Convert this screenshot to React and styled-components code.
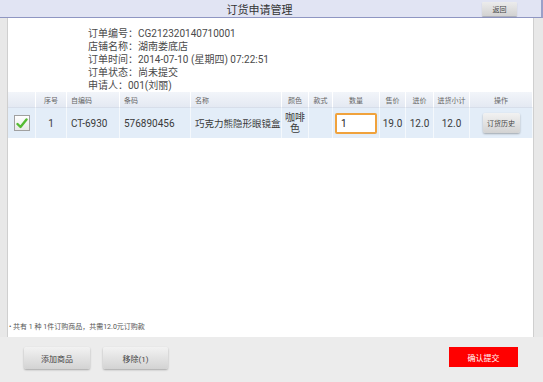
import React from 'react'
import styled, { createGlobalStyle } from 'styled-components'

const GlobalStyle = createGlobalStyle`
  *, *::before, *::after {
    box-sizing: border-box;
  }
  html, body {
    margin: 0;
    padding: 0;
    background: #ececec;
    font-family: Roboto, "Noto Sans CJK SC", sans-serif;
  }
`

const Screen = styled.div`
  width: 543px;
  height: 382px;
  display: flex;
  flex-direction: column;
  background: #ececec;
  overflow: hidden;
`

const TitleBar = styled.div`
  height: 18px;
  flex-shrink: 0;
  display: flex;
  align-items: center;
  padding-left: 37px;
  padding-right: 24px;
  background: #e1e4f3;
  border-bottom: 1px solid #8f96c2;
  border-right: 2px solid #9aa0c8;
`

const Title = styled.div`
  flex: 1;
  text-align: center;
  font-size: 11px;
  color: #333;
`

const BackButton = styled.button`
  width: 35px;
  height: 14px;
  padding: 0;
  border: none;
  border-radius: 1px;
  background: linear-gradient(#ececec, #d2d2d2);
  box-shadow: 0 1px 1px rgba(0, 0, 0, 0.25);
  font-family: inherit;
  font-size: 7px;
  color: #444;
`

const Main = styled.div`
  flex: 1;
  display: flex;
  min-height: 0;
`

const Gutter = styled.div`
  width: ${p => p.w}px;
  background: #e8e8e8;
  border-${p => p.side}: 1px solid #cfcfcf;
`

const Panel = styled.div`
  flex: 1;
  display: flex;
  flex-direction: column;
  background: #fff;
`

const Info = styled.div`
  padding: 9px 0 0 80px;
  font-size: 10px;
  line-height: 13px;
  color: #4a4a4a;
`

const Table = styled.div`
  display: grid;
  grid-template-columns: 28px 31px 53px 71px 91px 27px 24px 47px 26px 28px 36px 1fr;
`

const HeadCell = styled.div`
  height: 16px;
  display: flex;
  align-items: center;
  justify-content: ${p => (p.left ? 'flex-start' : 'center')};
  padding-left: ${p => (p.left ? 4 : 0)}px;
  background: linear-gradient(#f2f5fa, #e4e9f2);
  border-right: 1px solid #fff;
  border-bottom: 1px solid #d7deea;
  font-size: 7px;
  color: #666;
`

const Cell = styled.div`
  height: 30px;
  display: flex;
  align-items: center;
  justify-content: ${p => (p.left ? 'flex-start' : 'center')};
  padding-left: ${p => (p.left ? 4 : 0)}px;
  background: #e3edf8;
  border-right: 1px solid #f4f8fc;
  font-size: ${p => p.fs || 10}px;
  line-height: 11px;
  text-align: center;
  color: #3a3a3a;
`

const Check = styled.div`
  width: 16px;
  height: 16px;
  display: flex;
  align-items: center;
  justify-content: center;
  background: linear-gradient(#ffffff, #e8e8e8);
  border: 1px solid #a0a0a0;
`

const QtyInput = styled.div`
  width: 42px;
  height: 21px;
  display: flex;
  align-items: center;
  padding-left: 4px;
  background: #fff;
  border: 2px solid #f0a23c;
  border-radius: 2px;
  font-size: 10px;
  color: #222;
`

const GreyButton = styled.button`
  width: ${p => p.w}px;
  height: ${p => p.h}px;
  padding: 0;
  border: none;
  border-radius: 2px;
  background: linear-gradient(#f2f2f2, #d3d3d3);
  box-shadow: 0 1px 2px rgba(0, 0, 0, 0.3);
  font-family: inherit;
  font-size: ${p => p.fs}px;
  color: #444;
`

const Spacer = styled.div`
  flex: 1;
`

const Summary = styled.div`
  padding: 0 0 6px 1px;
  font-size: 7px;
  color: #555;
`

const Footer = styled.div`
  height: 45px;
  flex-shrink: 0;
  display: flex;
  align-items: flex-start;
  padding: 10px 25px 0 24px;
  gap: 13px;
`

const SubmitButton = styled.button`
  width: 69px;
  height: 20px;
  margin-left: auto;
  padding: 0;
  border: none;
  background: #ff0000;
  font-family: inherit;
  font-size: 8px;
  color: #fff;
`

const heads = [
  ['', false], ['序号', false], ['自编码', true], ['条码', true], ['名称', true],
  ['颜色', false], ['款式', false], ['数量', false], ['售价', false], ['进价', false],
  ['进货小计', false], ['操作', false]
]

export default function App () {
  return (
    <Screen>
      <GlobalStyle />
      <TitleBar>
        <Title>订货申请管理</Title>
        <BackButton>返回</BackButton>
      </TitleBar>
      <Main>
        <Gutter w={8} side='right' />
        <Panel>
          <Info>
            <div>订单编号：CG212320140710001</div>
            <div>店铺名称：湖南娄底店</div>
            <div>订单时间：2014-07-10 (星期四) 07:22:51</div>
            <div>订单状态：尚未提交</div>
            <div>申请人：001(刘丽)</div>
          </Info>
          <Table>
            {heads.map(([t, left], i) => (
              <HeadCell key={i} left={left}>{t}</HeadCell>
            ))}
            <Cell>
              <Check>
                <svg width='12' height='11' viewBox='0 0 12 11'>
                  <path d='M1.5 6 L4.5 9 L10.5 1.5' fill='none' stroke='#55bb33' strokeWidth='2.4' strokeLinecap='round' strokeLinejoin='round' />
                </svg>
              </Check>
            </Cell>
            <Cell>1</Cell>
            <Cell left>CT-6930</Cell>
            <Cell left>576890456</Cell>
            <Cell left fs={9.5}>巧克力熊隐形眼镜盒</Cell>
            <Cell>咖啡<br />色</Cell>
            <Cell />
            <Cell><QtyInput>1</QtyInput></Cell>
            <Cell>19.0</Cell>
            <Cell>12.0</Cell>
            <Cell>12.0</Cell>
            <Cell><GreyButton w={37} h={20} fs={7}>订货历史</GreyButton></Cell>
          </Table>
          <Spacer />
          <Summary>• 共有 1 种 1件订购商品，共需12.0元订购款</Summary>
        </Panel>
        <Gutter w={10} side='left' />
      </Main>
      <Footer>
        <GreyButton w={66} h={22} fs={8}>添加商品</GreyButton>
        <GreyButton w={65} h={22} fs={8}>移除(1)</GreyButton>
        <SubmitButton>确认提交</SubmitButton>
      </Footer>
    </Screen>
  )
}
